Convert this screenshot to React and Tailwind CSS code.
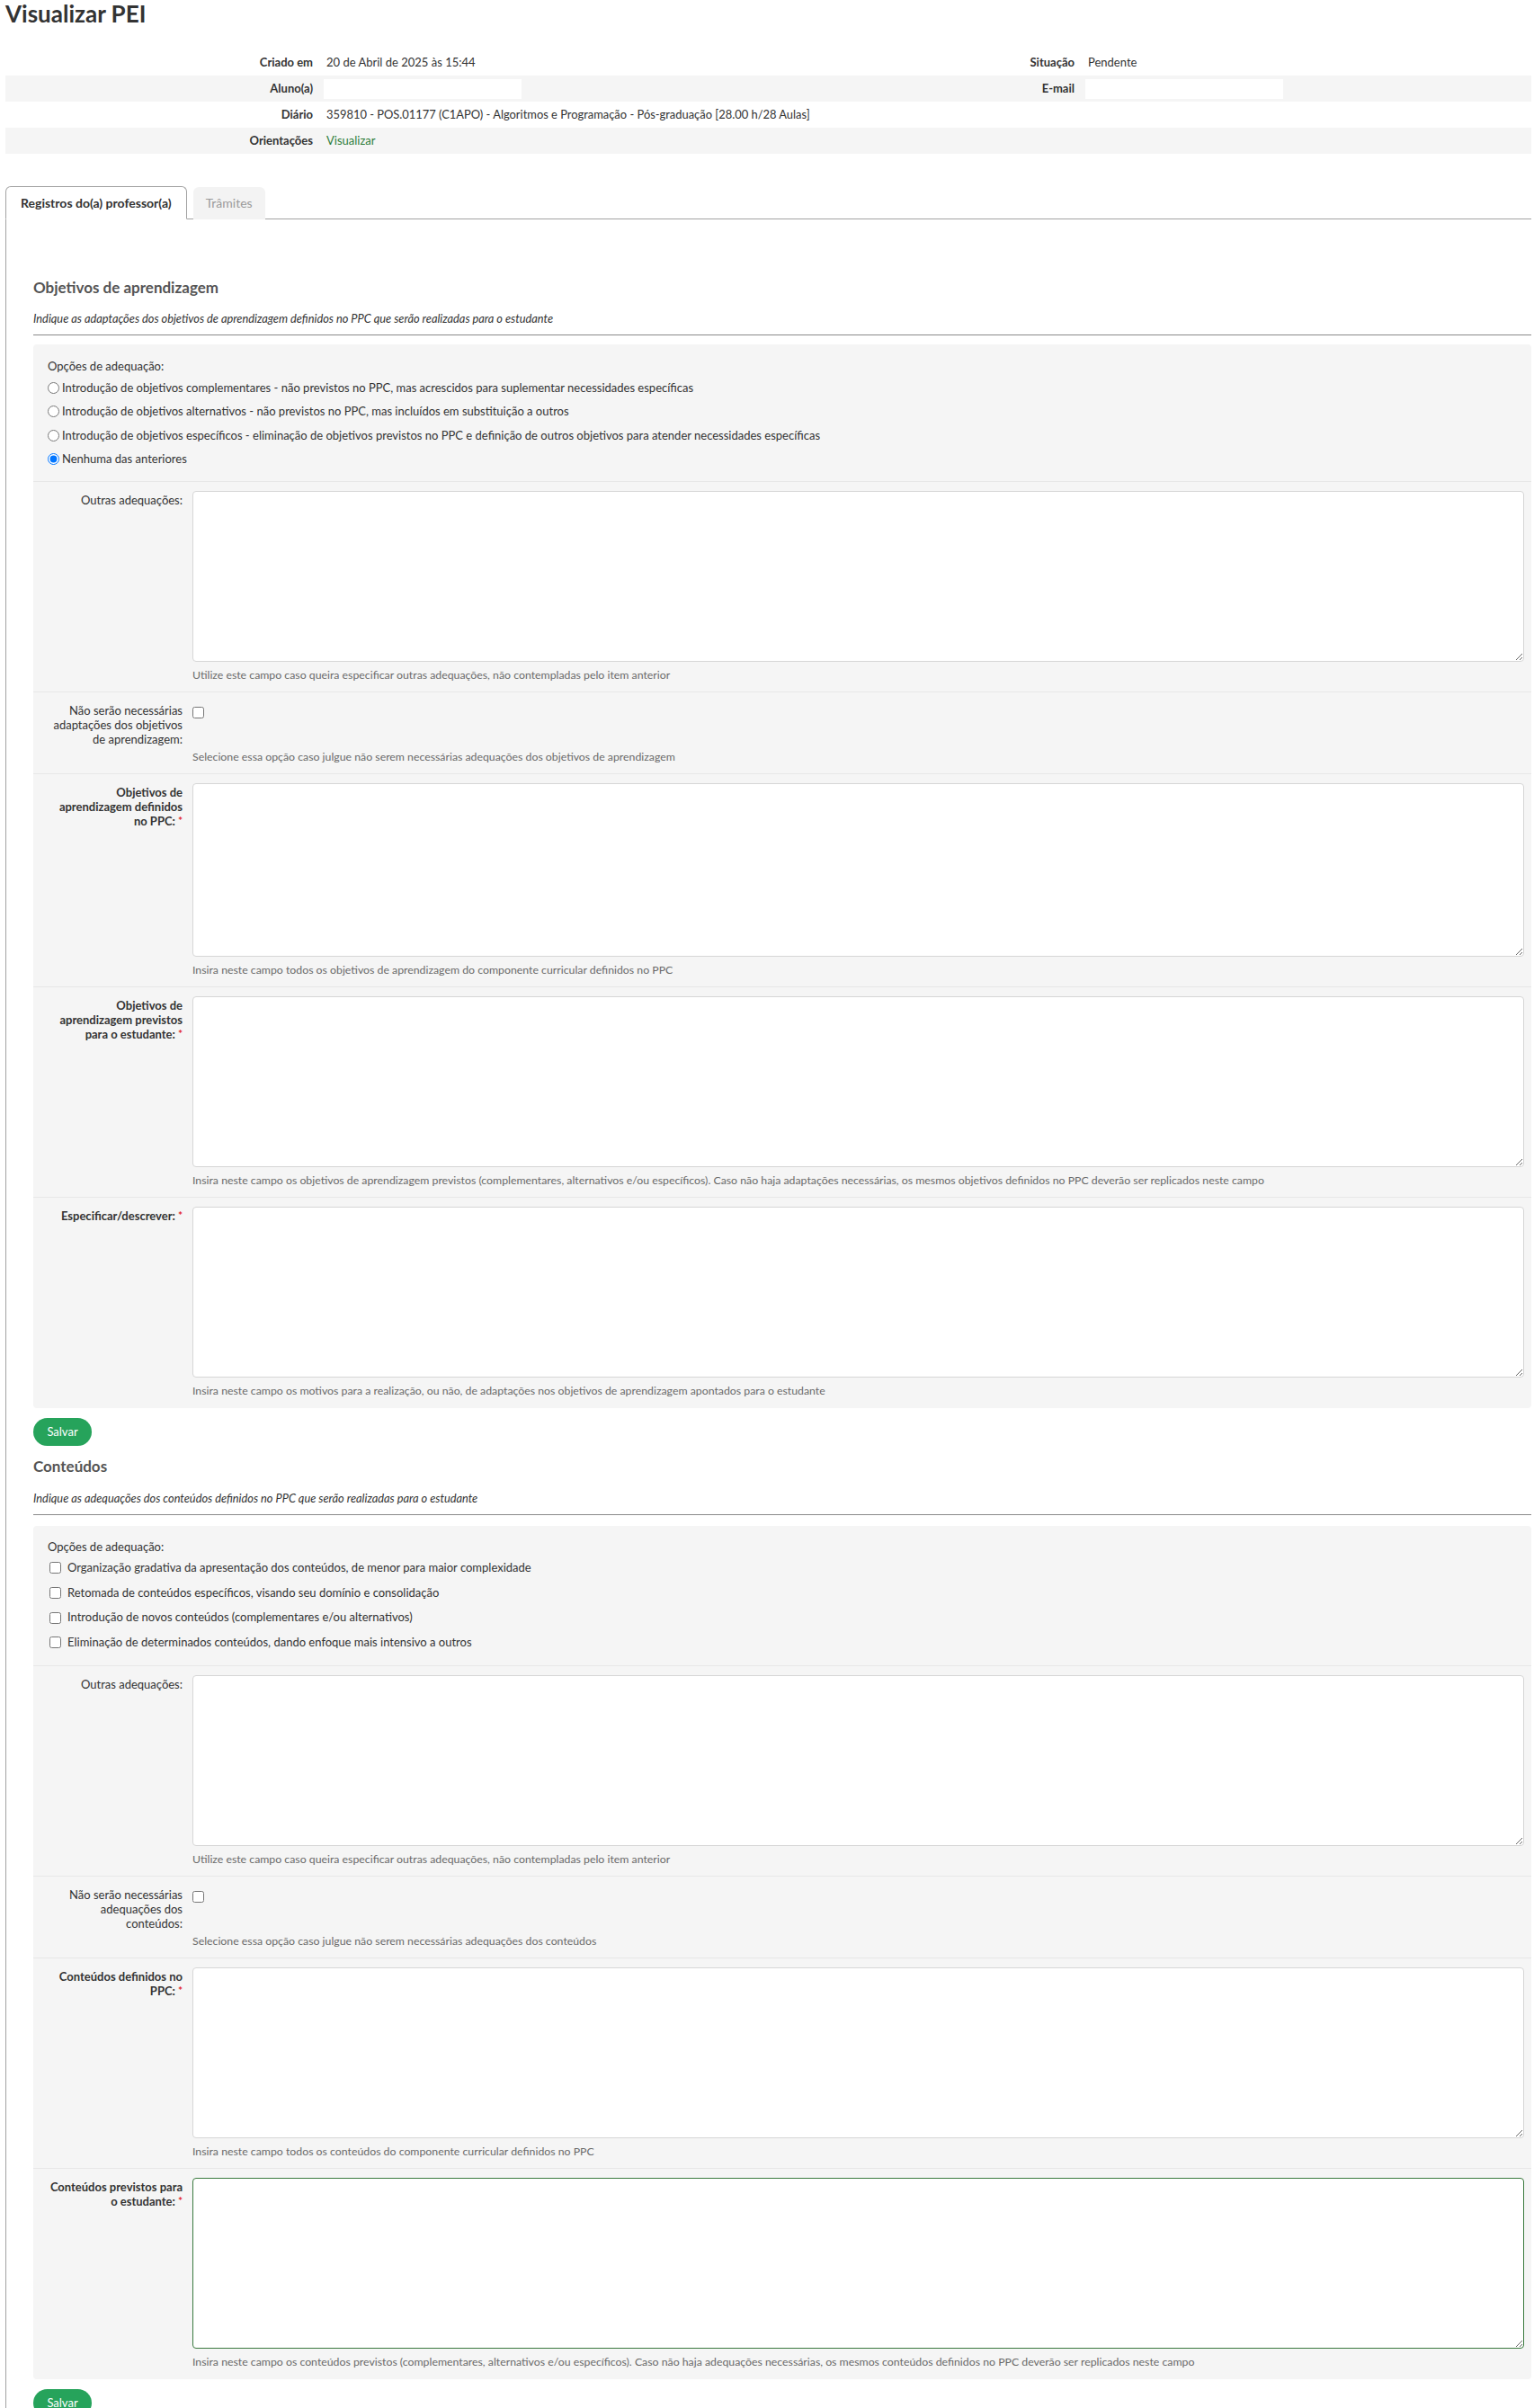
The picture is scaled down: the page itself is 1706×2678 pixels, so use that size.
import React from 'react';

const radios = [
  'Introdução de objetivos complementares - não previstos no PPC, mas acrescidos para suplementar necessidades específicas',
  'Introdução de objetivos alternativos - não previstos no PPC, mas incluídos em substituição a outros',
  'Introdução de objetivos específicos - eliminação de objetivos previstos no PPC e definição de outros objetivos para atender necessidades específicas',
  'Nenhuma das anteriores',
];

const checks = [
  'Organização gradativa da apresentação dos conteúdos, de menor para maior complexidade',
  'Retomada de conteúdos específicos, visando seu domínio e consolidação',
  'Introdução de novos conteúdos (complementares e/ou alternativos)',
  'Eliminação de determinados conteúdos, dando enfoque mais intensivo a outros',
];

function Req() {
  return (
    <span className="ml-[3px] inline-block align-top text-[12px] leading-[16px] font-bold text-[#e3242f]">*</span>
  );
}

function InfoRow({ gray, children }) {
  return (
    <div className={`grid h-[29px] grid-cols-[349px_497px_350px_1fr] items-center ${gray ? 'bg-[#f5f5f5]' : ''}`}>
      {children}
    </div>
  );
}

function Th({ children }) {
  return <div className="pr-[7px] text-right font-bold">{children}</div>;
}

function Area({ focus, tall }) {
  return (
    <textarea
      className={`block w-full rounded-[4px] border bg-white ${tall ? 'h-[193px]' : 'h-[190px]'} ${
        focus ? 'border-[#3b7a3f]' : 'border-[#d6d6d6]'
      }`}
    />
  );
}

function FieldRow({ label, required, help, check, last, children }) {
  return (
    <div
      className={`grid grid-cols-[150px_1fr] gap-x-[11px] border-t border-[#e7e7e7] pt-[10px] pl-[16px] pr-[8px] ${
        last ? 'pb-[11px]' : 'pb-[10px]'
      }`}
    >
      <div className={`pt-[2px] text-right leading-[16px] ${required ? 'font-bold' : ''}`}>
        {label}
        {required && <Req />}
      </div>
      <div>{children}</div>
      <div />
      <p className={`${check ? 'mt-[4px]' : 'mt-[7px]'} text-[12.3px] leading-[16px] text-[#6a6a6a]`}>{help}</p>
    </div>
  );
}

function SectionHead({ title, subtitle }) {
  return (
    <>
      <h3 className="text-[17px] leading-[20px] font-bold text-[#555]">{title}</h3>
      <p className="mt-[16px] text-[12.8px] leading-[16px] italic text-[#333]">{subtitle}</p>
      <div className="mt-[10px] border-t border-[#8a8a8a]" />
    </>
  );
}

function Salvar() {
  return (
    <button className="mt-[11px] block h-[31px] w-[65px] rounded-[16px] bg-[#26a35b] text-[13px] text-white">
      Salvar
    </button>
  );
}

export default function App() {
  return (
    <div className="h-screen overflow-hidden bg-white font-['Lato','Liberation_Sans',sans-serif] text-[13px] text-[#333]">
      <div className="pl-[6px] pr-[3px]">
        <h1 className="text-[26px] leading-[30px] font-bold text-[#333]">Visualizar PEI</h1>

        {/* Cabeçalho com dados do PEI */}
        <div className="mt-[25px]">
          <InfoRow>
            <Th>Criado em</Th>
            <div className="pl-[8px]">20 de Abril de 2025 às 15:44</div>
            <Th>Situação</Th>
            <div className="pl-[8px]">Pendente</div>
          </InfoRow>
          <InfoRow gray>
            <Th>Aluno(a)</Th>
            <div className="pl-[5px]">
              <div className="h-[22px] w-[220px] bg-white" />
            </div>
            <Th>E-mail</Th>
            <div className="pl-[5px]">
              <div className="h-[22px] w-[220px] bg-white" />
            </div>
          </InfoRow>
          <InfoRow>
            <Th>Diário</Th>
            <div className="col-span-3 pl-[8px] text-[12.9px]">
              359810 - POS.01177 (C1APO) - Algoritmos e Programação - Pós-graduação [28.00 h/28 Aulas]
            </div>
          </InfoRow>
          <InfoRow gray>
            <Th>Orientações</Th>
            <div className="col-span-3 pl-[8px]">
              <a className="text-[#2e7d3a]">Visualizar</a>
            </div>
          </InfoRow>
        </div>

        {/* Abas */}
        <div className="relative z-10 mt-[36px] -mb-px flex items-end gap-[7px] text-[14px]">
          <div className="h-[37px] rounded-t-[6px] border border-b-white border-[#a3a3a3] bg-white px-[16px] leading-[35px] font-bold">
            Registros do(a) professor(a)
          </div>
          <div className="h-[36px] rounded-t-[6px] bg-[#f3f3f3] px-[14px] leading-[36px] text-[#9a9a9a]">Trâmites</div>
        </div>

        <div className="border-l border-t border-[#a3a3a3] pt-[66px] pl-[30px]">
          <SectionHead
            title="Objetivos de aprendizagem"
            subtitle="Indique as adaptações dos objetivos de aprendizagem definidos no PPC que serão realizadas para o estudante"
          />
          <div className="mt-[10px] rounded-[4px] bg-[#f5f5f5]">
            <div className="pt-[14px] pb-[11px] pl-[16px]">
              <p className="leading-[20px]">Opções de adequação:</p>
              <div className="mt-[1px]">
                {radios.map((r, i) => (
                  <label key={r} className="flex h-[26.5px] items-center">
                    <input type="radio" name="obj" defaultChecked={i === 3} className="mr-[3px] h-[13px] w-[13px]" />
                    {r}
                  </label>
                ))}
              </div>
            </div>
            <FieldRow label="Outras adequações:" help="Utilize este campo caso queira especificar outras adequações, não contempladas pelo item anterior">
              <Area />
            </FieldRow>
            <FieldRow
              check
              label="Não serão necessárias adaptações dos objetivos de aprendizagem:"
              help="Selecione essa opção caso julgue não serem necessárias adequações dos objetivos de aprendizagem"
            >
              <input type="checkbox" className="mt-[6px] block h-[13px] w-[13px]" />
            </FieldRow>
            <FieldRow
              required
              label="Objetivos de aprendizagem definidos no PPC:"
              help="Insira neste campo todos os objetivos de aprendizagem do componente curricular definidos no PPC"
            >
              <Area tall />
            </FieldRow>
            <FieldRow
              required
              label="Objetivos de aprendizagem previstos para o estudante:"
              help="Insira neste campo os objetivos de aprendizagem previstos (complementares, alternativos e/ou específicos). Caso não haja adaptações necessárias, os mesmos objetivos definidos no PPC deverão ser replicados neste campo"
            >
              <Area />
            </FieldRow>
            <FieldRow
              required
              last
              label="Especificar/descrever:"
              help="Insira neste campo os motivos para a realização, ou não, de adaptações nos objetivos de aprendizagem apontados para o estudante"
            >
              <Area />
            </FieldRow>
          </div>
          <Salvar />

          <div className="mt-[13px]">
            <h3 className="text-[17px] leading-[20px] font-bold text-[#555]">Conteúdos</h3>
            <p className="mt-[17px] text-[12.8px] leading-[16px] italic text-[#333]">
              Indique as adequações dos conteúdos definidos no PPC que serão realizadas para o estudante
            </p>
            <div className="mt-[10px] border-t border-[#8a8a8a]" />
          </div>
          <div className="mt-[12px] rounded-[4px] bg-[#f5f5f5]">
            <div className="pt-[13px] pb-[11px] pl-[16px]">
              <p className="leading-[20px]">Opções de adequação:</p>
              {checks.map((c) => (
                <label key={c} className="flex h-[27.7px] items-center">
                  <input type="checkbox" className="mr-[7px] ml-[2px] h-[13px] w-[13px]" />
                  {c}
                </label>
              ))}
            </div>
            <FieldRow label="Outras adequações:" help="Utilize este campo caso queira especificar outras adequações, não contempladas pelo item anterior">
              <Area />
            </FieldRow>
            <FieldRow
              check
              label="Não serão necessárias adequações dos conteúdos:"
              help="Selecione essa opção caso julgue não serem necessárias adequações dos conteúdos"
            >
              <input type="checkbox" className="mt-[6px] block h-[13px] w-[13px]" />
            </FieldRow>
            <FieldRow
              required
              label="Conteúdos definidos no PPC:"
              help="Insira neste campo todos os conteúdos do componente curricular definidos no PPC"
            >
              <Area />
            </FieldRow>
            <FieldRow
              required
              last
              label="Conteúdos previstos para o estudante:"
              help="Insira neste campo os conteúdos previstos (complementares, alternativos e/ou específicos). Caso não haja adequações necessárias, os mesmos conteúdos definidos no PPC deverão ser replicados neste campo"
            >
              <Area focus />
            </FieldRow>
          </div>
          <Salvar />
        </div>
      </div>
    </div>
  );
}
